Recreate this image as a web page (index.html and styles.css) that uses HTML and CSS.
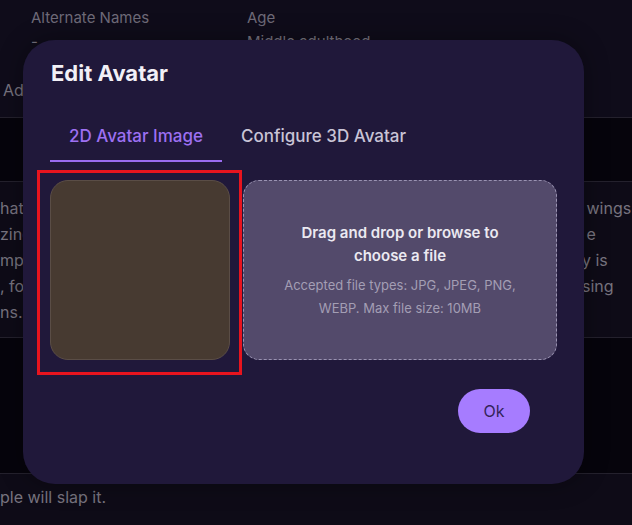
FILE: index.html
```html
<!DOCTYPE html>
<html lang="en">
<head>
<meta charset="utf-8">
<title>Edit Avatar</title>
<link rel="stylesheet" href="styles.css">
</head>
<body>
<div class="page">
  <section class="band band-info">
    <div class="fields">
      <div class="field">
        <div class="label">Alternate Names</div>
        <div class="value">-</div>
      </div>
      <div class="field">
        <div class="label">Age</div>
        <div class="value">Middle adulthood</div>
      </div>
    </div>
    <div class="section-title">Additional Details</div>
  </section>
  <section class="band band-dark"></section>
  <section class="band band-desc">
    <div class="line"><span>hat</span><span>&nbsp;wings</span></div>
    <div class="line"><span>zing</span><span>&nbsp;e</span></div>
    <div class="line"><span>mp</span><span>y is</span></div>
    <div class="line"><span>, fo</span><span>sing</span></div>
    <div class="line"><span>ns.</span><span></span></div>
  </section>
  <section class="band band-dark"></section>
  <section class="band band-foot">
    <p class="foot-text">ple will slap it.</p>
  </section>
</div>

<div class="modal" role="dialog" aria-label="Edit Avatar">
  <h2 class="modal-title">Edit Avatar</h2>
  <div class="tabs">
    <button class="tab tab-active">2D Avatar Image</button>
    <button class="tab">Configure 3D Avatar</button>
  </div>
  <div class="content">
    <div class="avatar"></div>
    <div class="dropzone">
      <div class="drop-title">Drag and drop or browse to<br>choose a file</div>
      <div class="drop-note">Accepted file types: JPG, JPEG, PNG,<br>WEBP. Max file size: 10MB</div>
    </div>
  </div>
  <div class="actions">
    <button class="ok">Ok</button>
  </div>
</div>
</body>
</html>
```
FILE: styles.css
```css
* { box-sizing: border-box; }

html, body {
  margin: 0;
  padding: 0;
  background: #0b0914;
  font-family: Inter, "Noto Sans", sans-serif;
  overflow: hidden;
}

.page {
  width: 632px;
  height: 525px;
}

.band {
  border-bottom: 1px solid #24212d;
}

.band-info {
  height: 118px;
  background: #0f0c1a;
  color: #6e6a78;
}

.fields {
  display: grid;
  grid-template-columns: 216px 1fr;
  padding: 8px 0 0 31px;
}

.label {
  font-size: 15px;
  line-height: 20px;
}

.value {
  font-size: 15px;
  line-height: 20px;
  margin-top: 4px;
  color: #77737f;
}

.section-title {
  margin: 28px 0 0 3px;
  font-size: 16px;
  line-height: 20px;
  color: #77737f;
}

.band-dark {
  height: 64px;
  background: #06040c;
}

.band-desc {
  height: 156px;
  background: #0e0b17;
  padding-top: 13px;
  color: #77737f;
  font-size: 16px;
}

.line {
  display: grid;
  grid-template-columns: 582px 1fr;
  height: 26px;
  line-height: 26px;
  white-space: nowrap;
}

.band-dark + .band-desc + .band-dark {
  height: 136px;
}

.band-foot {
  height: 52px;
  background: #0e0b17;
  border-bottom: 0;
}

.foot-text {
  margin: 0;
  padding-top: 13px;
  font-size: 16px;
  line-height: 20px;
  color: #77737f;
}

/* Modal */
.modal {
  position: absolute;
  left: 23px;
  top: 40px;
  width: 561px;
  height: 444px;
  border-radius: 32px;
  background: #20183a;
  padding: 19px 27px 0;
  box-shadow: 0 0 24px rgba(0, 0, 0, 0.35);
}

.modal-title {
  margin: 0 0 0 1px;
  font-size: 22px;
  line-height: 29px;
  font-weight: 700;
  color: #f2f0f6;
}

.tabs {
  display: flex;
  margin-top: 24px;
}

.tab {
  font-family: Inter, "Noto Sans", sans-serif;
  font-size: 17px;
  line-height: 24px;
  font-weight: 500;
  padding: 12px 19px 12px;
  border: 0;
  border-bottom: 2px solid transparent;
  background: none;
  color: #c9c4d6;
  cursor: pointer;
}

.tab-active {
  color: #9d70f2;
  border-bottom-color: #9a6cf0;
}

.content {
  display: flex;
  gap: 13px;
  margin-top: 18px;
}

.avatar {
  position: relative;
  flex: 0 0 180px;
  height: 180px;
  border-radius: 18px;
  background: #473a31;
  border: 1px solid #5a4d46;
}

.avatar::after {
  content: "";
  position: absolute;
  left: -14px;
  top: -11px;
  right: -13px;
  bottom: -16px;
  border: 3px solid #e8141e;
}

.dropzone {
  flex: 1;
  height: 180px;
  border-radius: 16px;
  background: #534a6b;
  border: 1px dashed #9a93b2;
  display: flex;
  flex-direction: column;
  align-items: center;
  justify-content: center;
  text-align: center;
}

.drop-title {
  font-size: 15px;
  line-height: 23px;
  font-weight: 600;
  color: #ebe9f1;
}

.drop-note {
  margin-top: 7px;
  font-size: 13px;
  line-height: 23px;
  color: #a39eb4;
}

.actions {
  display: flex;
  justify-content: flex-end;
  margin-top: 29px;
  padding-right: 27px;
}

.ok {
  width: 72px;
  height: 44px;
  border-radius: 22px;
  border: 0;
  background: #a67cff;
  color: #33245a;
  font-family: Inter, "Noto Sans", sans-serif;
  font-size: 16px;
  cursor: pointer;
}
```
